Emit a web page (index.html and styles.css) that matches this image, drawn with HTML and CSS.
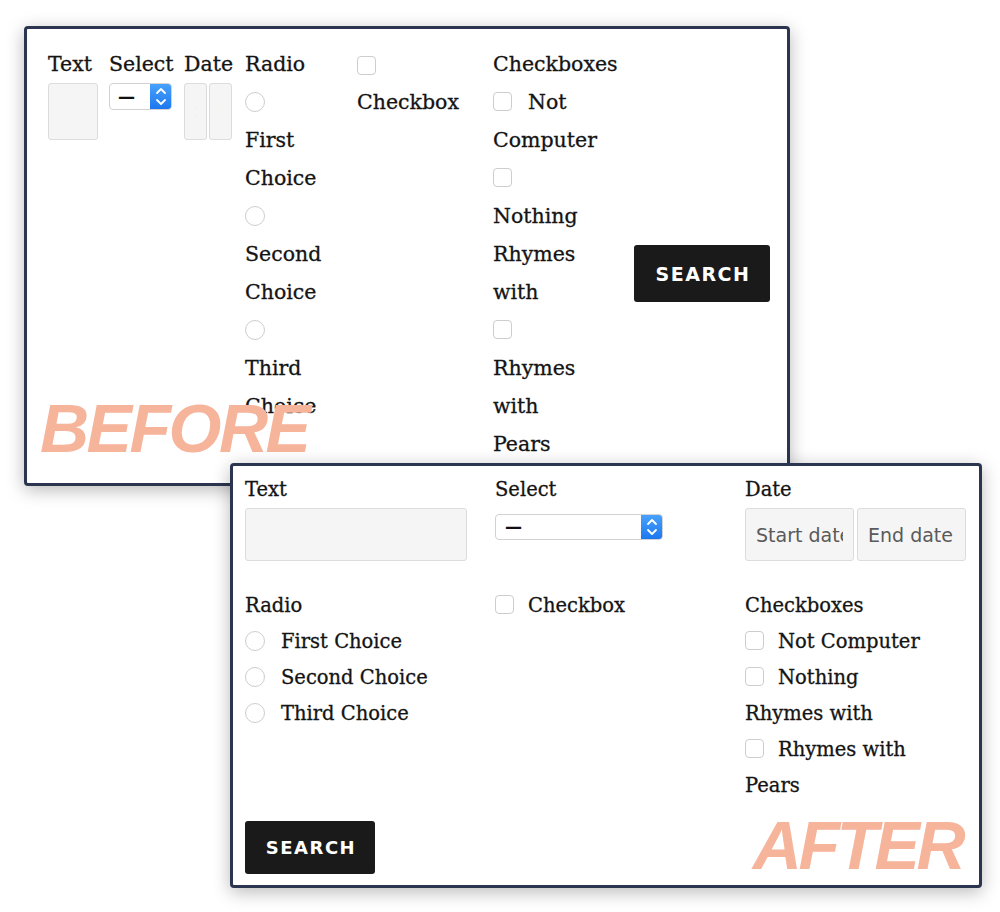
FILE: index.html
```html
<!DOCTYPE html>
<html>
<head>
<meta charset="utf-8">
<link rel="stylesheet" href="styles.css">
</head>
<body>
<div class="stage">
  <section class="panel before">
    <form class="before-form">
      <div class="field f-text">
        <label class="lbl">Text</label>
        <input class="inp inp-text" type="text">
      </div>
      <div class="field f-select">
        <label class="lbl">Select</label>
        <div class="select">
          <span class="val">—</span>
          <span class="stepper"><svg viewBox="0 0 22 27" width="22" height="27"><path d="M7 10 L11 6 L15 10 M7 17 L11 21 L15 17" fill="none" stroke="#fff" stroke-width="1.8" stroke-linecap="round" stroke-linejoin="round"/></svg></span>
        </div>
      </div>
      <div class="field f-date">
        <label class="lbl">Date</label>
        <div class="dates">
          <input class="inp inp-date" type="text" placeholder="Start date">
          <input class="inp inp-date" type="text" placeholder="End date">
        </div>
      </div>
      <div class="field f-radio">
        <label class="lbl">Radio</label>
        <label class="opt"><span class="radio"></span>First Choice</label>
        <label class="opt"><span class="radio"></span>Second Choice</label>
        <label class="opt"><span class="radio"></span>Third Choice</label>
      </div>
      <div class="field f-check">
        <label class="opt"><span class="check"></span>Checkbox</label>
      </div>
      <div class="field f-checks">
        <label class="lbl">Checkboxes</label>
        <label class="opt"><span class="check"></span>Not Computer</label>
        <label class="opt"><span class="check"></span>Nothing Rhymes with</label>
        <label class="opt"><span class="check"></span>Rhymes with Pears</label>
      </div>
      <div class="field f-btn">
        <button class="btn" type="button">SEARCH</button>
      </div>
    </form>
    <div class="tag tag-before">BEFORE</div>
  </section>

  <section class="panel after">
    <form class="after-form">
      <div class="grid">
        <div class="field">
          <label class="lbl">Text</label>
          <input class="inp inp-text" type="text">
        </div>
        <div class="field">
          <label class="lbl">Select</label>
          <div class="select">
            <span class="val">—</span>
            <span class="stepper"><svg viewBox="0 0 22 26" width="22" height="26"><path d="M7 10 L11 6 L15 10 M7 16 L11 20 L15 16" fill="none" stroke="#fff" stroke-width="1.8" stroke-linecap="round" stroke-linejoin="round"/></svg></span>
          </div>
        </div>
        <div class="field">
          <label class="lbl">Date</label>
          <div class="dates">
            <input class="inp inp-date" type="text" placeholder="Start date">
            <input class="inp inp-date" type="text" placeholder="End date">
          </div>
        </div>
        <div class="field">
          <label class="lbl">Radio</label>
          <label class="opt"><span class="radio"></span>First Choice</label>
          <label class="opt"><span class="radio"></span>Second Choice</label>
          <label class="opt"><span class="radio"></span>Third Choice</label>
        </div>
        <div class="field">
          <label class="opt"><span class="check"></span>Checkbox</label>
        </div>
        <div class="field">
          <label class="lbl">Checkboxes</label>
          <label class="opt"><span class="check"></span>Not Computer</label>
          <label class="opt"><span class="check"></span>Nothing Rhymes with</label>
          <label class="opt"><span class="check"></span>Rhymes with Pears</label>
        </div>
      </div>
      <button class="btn" type="button">SEARCH</button>
    </form>
    <div class="tag tag-after">AFTER</div>
  </section>
</div>
</body>
</html>
```
FILE: styles.css
```css
* { box-sizing: border-box; }
html, body { margin: 0; padding: 0; background: #fff; }
body {
  font-family: "DejaVu Serif", "Liberation Serif", serif;
  color: #141414;
}
.stage {
  position: relative;
  width: 1000px;
  height: 912px;
  overflow: hidden;
}
.panel {
  position: absolute;
  background: #fff;
  border: 3px solid #2c3550;
  border-radius: 4px;
  box-shadow: 0 4px 18px rgba(0, 0, 0, 0.28);
}
.before {
  left: 24px;
  top: 26px;
  width: 766px;
  height: 460px;
  z-index: 1;
}
.after {
  left: 230px;
  top: 463px;
  width: 752px;
  height: 425px;
  z-index: 2;
}

/* shared controls */
.lbl, .opt { display: block; -webkit-text-stroke: 0.3px currentColor; }
.inp {
  display: block;
  margin: 0;
  font-family: "DejaVu Sans", sans-serif;
  background: #f5f5f5;
  border: 1px solid #dcdcdc;
  border-radius: 3px;
  outline: none;
  box-sizing: content-box;
}
.inp::placeholder { color: #5a5a5a; }
.select {
  display: flex;
  align-items: stretch;
  background: #fff;
  border: 1px solid #d2d2d2;
  border-radius: 4px;
  overflow: hidden;
}
.select .val {
  flex: 1;
  display: flex;
  align-items: center;
  font-family: "DejaVu Sans", sans-serif;
  font-weight: bold;
  color: #111;
}
.stepper {
  width: 22px;
  background: linear-gradient(#4aa3fd, #1b76ee);
  display: flex;
  align-items: center;
  justify-content: center;
  margin: -1px -1px -1px 0;
  border-radius: 0 4px 4px 0;
}
.stepper svg { display: block; }
.radio, .check {
  display: inline-block;
  width: 19px;
  height: 19px;
  background: #fff;
  border: 1px solid #cdcdcd;
  vertical-align: middle;
  position: relative;
  top: -2px;
}
.radio { border-radius: 50%; width: 20px; height: 20px; }
.check { border-radius: 4px; }
.btn {
  display: inline-flex;
  align-items: center;
  justify-content: center;
  background: #1a1a1a;
  color: #fff;
  border: none;
  border-radius: 3px;
  font-family: "DejaVu Sans", sans-serif;
  font-weight: bold;
  padding: 0;
  cursor: pointer;
}
.tag {
  position: absolute;
  font-family: "Liberation Sans", Arial, sans-serif;
  font-style: italic;
  font-weight: bold;
  font-size: 68px;
  line-height: 1;
  color: #f6b49b;
  pointer-events: none;
}

/* BEFORE */
.before-form {
  display: flex;
  align-items: flex-start;
  gap: 12px;
  padding: 16px 0 0 21px;
  font-size: 20.5px;
  line-height: 38px;
}
.before .f-text { width: 50px; }
.before .f-select { width: 63px; margin-left: -1px; }
.before .f-date { width: 49px; }
.before .f-radio { width: 100px; }
.before .f-check { width: 124px; }
.before .f-checks { width: 106px; }
.before .f-btn { width: 136px; margin-left: 23px; padding-top: 200px; }
.before .inp-text { width: 48px; height: 55px; padding: 0; }
.before .select { height: 27px; }
.before .select .val { padding-left: 8px; font-size: 17px; }
.before .dates { display: flex; gap: 2px; }
.before .inp-date { width: 1px; height: 55px; padding: 0 10px; font-size: 16px; }
.before .f-radio .radio { display: block; margin: 9px 0; top: 0; }
.before .f-check .check { margin-right: 12px; top: 0; }
.before .f-checks .check { margin-right: 16px; }
.before .btn {
  width: 136px;
  height: 57px;
  font-size: 19px;
  letter-spacing: 1.5px;
  padding-left: 2px;
}
.tag-before { left: 13px; top: 365px; letter-spacing: -2.5px; }

/* AFTER */
.after-form {
  padding: 6px 12px 0 12px;
  font-size: 19.5px;
  line-height: 36px;
}
.after .grid {
  display: grid;
  grid-template-columns: 200px 200px 190px;
  column-gap: 50px;
  row-gap: 27px;
  margin-bottom: 17px;
}
.after .inp-text { width: 100%; height: 51px; padding: 0 10px; }
.after .select { width: 168px; height: 26px; margin-top: 6px; }
.after .select .val { padding-left: 9px; font-size: 17px; }
.after .dates { display: flex; gap: 3px; }
.after .inp-date {
  width: 87px;
  flex: none;
  height: 51px;
  padding: 0 10px;
  font-size: 19px;
  color: #555;
}
.after .radio { margin-right: 16px; }
.after .check { margin-right: 14px; }
.after .btn {
  width: 130px;
  height: 53px;
  font-size: 18px;
  letter-spacing: 1.5px;
  padding-left: 2px;
}
.tag-after { right: 17px; top: 345px; letter-spacing: -3.5px; }
```
